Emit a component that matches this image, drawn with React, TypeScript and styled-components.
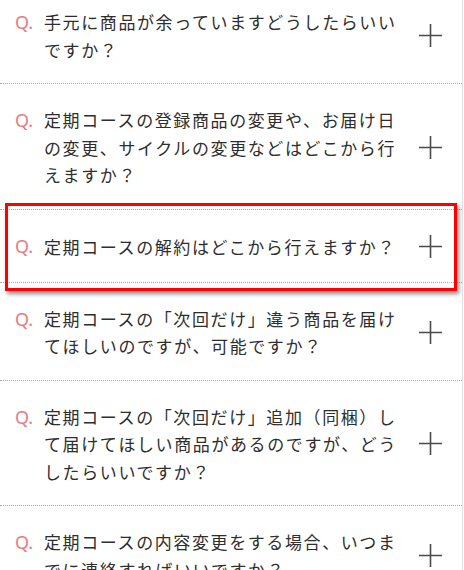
import React from "react";
import styled, { createGlobalStyle } from "styled-components";

const GlobalStyle = createGlobalStyle`
  html, body {
    margin: 0;
    padding: 0;
    background: #ffffff;
    overflow: hidden;
  }
  body {
    font-family: "Noto Sans CJK JP", "Noto Sans", sans-serif;
  }
`;

const Frame = styled.div`
  width: 462px;
  height: 570px;
  overflow: hidden;
  border-right: 1px solid #e2e2e2;
`;

const List = styled.ul`
  list-style: none;
  margin: -14px 0 0;
  padding: 0;
`;

const Item = styled.li`
  position: relative;
  display: flex;
  align-items: center;
  min-height: 30px;
  padding: 22px 20px 20px 15px;
  border-bottom: 1px dotted #a8a8a8;
`;

const QMark = styled.span`
  flex: 0 0 29px;
  align-self: flex-start;
  font-family: "Noto Sans", "Open Sans", sans-serif;
  font-size: 18px;
  line-height: 28px;
  color: #ea7b82;
`;

const Question = styled.p`
  flex: 0 0 360px;
  margin: 0;
  font-size: 17px;
  line-height: 27.5px;
  letter-spacing: 1.6px;
  color: #2e2e2e;
`;

const PlusIcon = styled.svg`
  flex: 0 0 23px;
  width: 23px;
  height: 23px;
  margin-left: auto;
`;

const Highlight = styled.div`
  position: absolute;
  left: 5px;
  right: 5px;
  top: -7px;
  bottom: -9px;
  border: 3px solid #ff0000;
  box-shadow: 2px 3px 4px rgba(0, 0, 0, 0.45);
  pointer-events: none;
`;

const questions = [
  "手元に商品が余っていますどうしたらいいですか？",
  "定期コースの登録商品の変更や、お届け日の変更、サイクルの変更などはどこから行えますか？",
  "定期コースの解約はどこから行えますか？",
  "定期コースの「次回だけ」違う商品を届けてほしいのですが、可能ですか？",
  "定期コースの「次回だけ」追加（同梱）して届けてほしい商品があるのですが、どうしたらいいですか？",
  "定期コースの内容変更をする場合、いつまでに連絡すればいいですか？",
];

const Plus = () => (
  <PlusIcon viewBox="0 0 23 23" aria-hidden="true">
    <path d="M11.5 0 V23 M0 11.5 H23" stroke="#4a4a4a" strokeWidth="1.6" fill="none" />
  </PlusIcon>
);

export default function App() {
  return (
    <>
      <GlobalStyle />
      <Frame>
        <List>
          {questions.map((q, i) => (
            <Item key={i}>
              <QMark>Q.</QMark>
              <Question>{q}</Question>
              <Plus />
              {i === 2 && <Highlight />}
            </Item>
          ))}
        </List>
      </Frame>
    </>
  );
}
